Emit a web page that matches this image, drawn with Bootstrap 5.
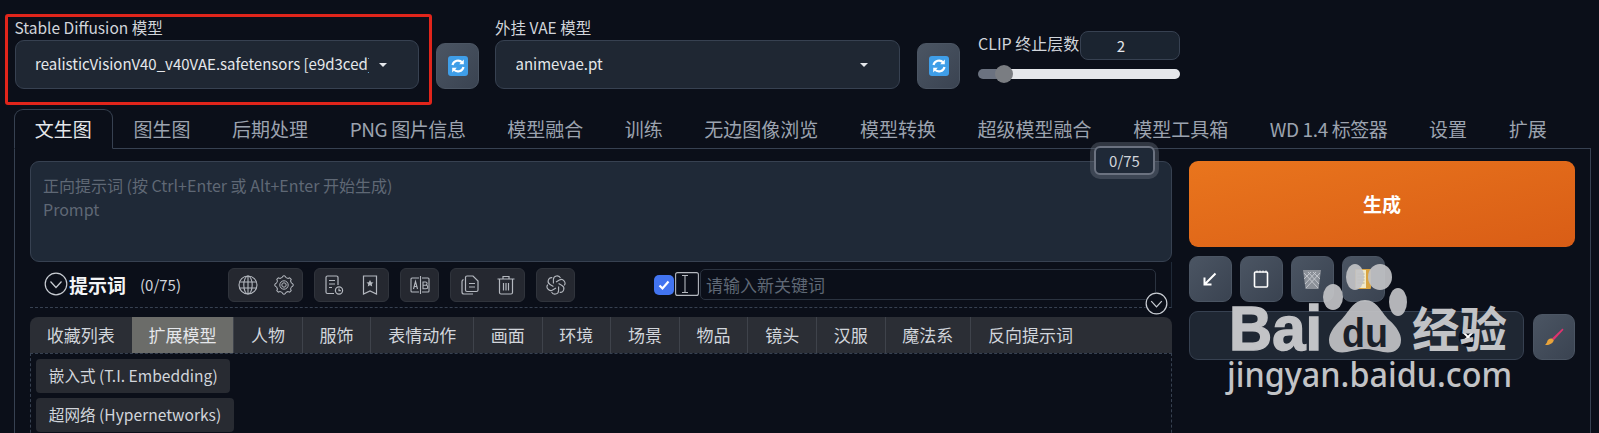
<!DOCTYPE html>
<html lang="zh-CN">
<head>
    <meta charset="UTF-8">
    <meta name="viewport" content="width=device-width, initial-scale=1.0">
    <title>Stable Diffusion WebUI</title>
    <link href="https://cdn.jsdelivr.net/npm/bootstrap@5.3.0/dist/css/bootstrap.min.css" rel="stylesheet">
    <style>
        html, body { height: 433px; overflow: hidden; }
        body {
            background: #0b0f19;
            color: #d1d5db;
            font-family: "Noto Sans CJK SC", "Noto Sans", sans-serif;
            position: relative;
        }
        /* top model bar */
        .topBar { padding: 14px 0 0 5px; height: 109px; }
        .modelBox { width: 427px; height: 91px; border: 3px solid #e1251b; border-radius: 3px; padding: 0 10px 0 6.5px; }
        .vaeBox { width: 405px; margin-left: 16px; padding-top: 3px; }
        .fieldLabel { font-size: 15.5px; line-height: 20px; height: 23px; color: #d1d5db; white-space: nowrap; }
        .fakeSelect {
            height: 49px; width: 100%; padding: 0 31px 0 19.5px;
            background: #1f2733; border: 1px solid #374151; border-radius: 9px;
            color: #e5e7eb; font-size: 15px;
        }
        .fakeSelect:hover, .fakeSelect:active { background: #1f2733 !important; border-color: #374151 !important; color: #e5e7eb !important; }
        .fakeSelect span { flex: 1; overflow: hidden; white-space: nowrap; text-align: left; }
        .fakeSelect::after { margin-left: 10px; }
        .refreshBtn { width: 43px; height: 46px; margin: 29px 0 0 4px; }
        .refreshBtn2 { margin-left: 17px; }
        .grayBtn {
            background: linear-gradient(to bottom right, #4b5563, #3a4351);
            border: 1px solid #4b5563; border-radius: 9px; padding: 0;
        }
        .clipBox { width: 202px; margin: 17px 0 0 18px; }
        .clipLabel { font-size: 16px; white-space: nowrap; line-height: 25px; }
        .clipInput {
            width: 100px; height: 29px; padding: 0 18px 0 0; text-align: center;
            background: #1b2430; border: 1px solid #374151; border-radius: 8px; color: #e5e7eb; font-size: 15px;
        }
        .clipRange {
            -webkit-appearance: none; appearance: none; display: block; width: 202px; height: 10px; margin-top: 9px;
            border-radius: 5px; background: linear-gradient(to right, #6b7280 25px, #e5e7eb 25px);
        }
        .clipRange::-webkit-slider-thumb {
            -webkit-appearance: none; appearance: none; width: 18px; height: 18px; border-radius: 50%;
            background: #7a7d82; border: 0;
        }
        /* main tabs */
        .mainTabs { margin-left: 14px; width: 1577px; height: 40px; --bs-nav-tabs-border-color: #374151; flex-wrap: nowrap; }
        .mainTabs .nav-link {
            height: 40px; padding: 0 19.8px; font-size: 19px; line-height: 38px; color: #9ca3af; white-space: nowrap;
            background: none; border-radius: 9px 9px 0 0; border-color: transparent; margin: 0;
        }
        .mainTabs .nav-link.active { color: #e5e7eb; background: #0b0f19; border-color: #374151 #374151 #0b0f19; }
        .mainTabs .nav-link.tabLatin { letter-spacing: -.4px; }
        .tabPanel { margin-left: 14px; width: 1577px; height: 285px; border: 1px solid #374151; border-top: 0; padding: 12px 15px 0; }
        .leftCol { width: 1142px; position: relative; }
        .rightCol { width: 386px; margin-left: 17px; }
        /* prompt */
        .promptBox {
            display: block; width: 100%; height: 101px; resize: none; padding: 11px 12px;
            background: #1f2937; border: 1px solid #374151; border-radius: 9px;
            color: #e5e7eb; font-size: 16px; line-height: 24px;
        }
        .promptBox::placeholder { color: #5f6875; opacity: 1; }
        .tokenCount {
            position: absolute; top: -15px; right: 17px; width: 61px; height: 29px; line-height: 25px; text-align: center;
            background: #1f2937; border: 2px solid #6b7280; border-radius: 6px; font-size: 15px; color: #d1d5db;
            box-shadow: 0 0 0 4px rgba(107, 114, 128, .4);
        }
        .promptBar { height: 46px; border-bottom: 1px dashed #374151; border-right: 1px solid #1f2937; padding: 6px 0 0 14px; }
        .barTitle { font-size: 19px; font-weight: 700; color: #f3f4f6; margin-left: 1px; width: 57px; line-height: 34px; white-space: nowrap; }
        .barCount { font-size: 15px; margin-left: 14px; width: 88px; color: #d1d5db; line-height: 34px; white-space: nowrap; }
        .toolGroup { height: 34px; background: #252830; border: 1px solid #30343c; border-radius: 6px; margin-right: 11px; padding: 0 8.5px; gap: 16px; }
        .wordCheck { width: 20px; height: 20px; margin: 7px 1px 0 68px; background: #4274f0; border-radius: 5px; }
        .wordInput {
            width: 456px; height: 31px; background: #0b0f19; border: 1px solid #2b3340; border-radius: 5px;
            padding: 0 5px; font-size: 17px; color: #e5e7eb; margin: 1px 0 0 1px;
        }
        .wordInput::placeholder { color: #5f6875; opacity: 1; }
        .chevBtn { position: absolute; top: 131px; right: 4px; background: #0b0f19; border-radius: 50%; line-height: 0; }
        .tagTabs { margin-top: 9px; height: 36px; background: #2b2e35; border-radius: 8px 8px 0 0; overflow: hidden; }
        .tagTab { padding: 0 16.8px; font-size: 17px; line-height: 35px; color: #d1d5db; border-left: 1px solid #3f434b; white-space: nowrap; }
        .tagTab:first-child { border-left: 0; }
        .tagTab.tagOn { background: #6b6c69; color: #e5e7eb; border-left: 0; }
        .tagBody { border: 1px dashed #374151; border-bottom: 0; height: 90px; padding: 5px 5px 0; }
        .subBtn { height: 34px; padding: 0 12.8px; font-size: 15.6px; line-height: 33px; background: #282b32; border-radius: 4px; color: #d1d5db; margin-bottom: 5px; white-space: nowrap; }
        /* generate column */
        .genBtn {
            display: block; width: 100%; height: 86px; border: 0; border-radius: 9px;
            background: linear-gradient(to bottom right, #e9751d, #d95d16);
            color: #fff; font-size: 19px; font-weight: 700;
        }
        .iconRow { margin-top: 9px; gap: 8.5px; }
        .iconBtn { width: 42.5px; height: 46px; }
        .styleRow { margin-top: 9px; }
        .styleSelect { width: 335px; height: 49px; background: #1f2733; border: 1px solid #374151; border-radius: 9px; position: relative; }
        .brushBtn { width: 42px; height: 46px; margin: 3px 0 0 9px; }
        .clearDot { position: absolute; left: 268px; top: 15px; line-height: 0; }
        /* watermark */
        .baiduMark { position: absolute; left: 1220px; top: 250px; width: 300px; height: 175px; pointer-events: none; overflow: visible; }
        .pawShape { fill: #c2c3c6; opacity: .92; }
        .markBig { font-family: "Liberation Sans", sans-serif; font-weight: 700; font-size: 63px; fill: #c2c3c6; stroke: #c2c3c6; stroke-width: 1.5px; }
        .markDu { font-family: "Liberation Sans", sans-serif; font-weight: 700; font-size: 40px; fill: #1b2029; }
        .markCn { font-family: "Noto Sans CJK SC", sans-serif; font-weight: 700; font-size: 48px; fill: #c2c3c6; }
        .markUrl { font-family: "Noto Sans", sans-serif; font-weight: 500; font-size: 35px; fill: #c2c3c6; }
    </style>
</head>
<body>
    <!-- model selectors -->
    <div class="d-flex align-items-start topBar">
        <div class="modelBox">
            <div class="fieldLabel">Stable Diffusion 模型</div>
            <button type="button" class="btn d-flex align-items-center dropdown-toggle fakeSelect"><span>realisticVisionV40_v40VAE.safetensors [e9d3ced]</span></button>
        </div>
        <button type="button" class="btn grayBtn refreshBtn d-flex align-items-center justify-content-center">
            <svg width="20" height="20" viewBox="0 0 20 20"><rect width="20" height="20" rx="3" fill="#3f9ee8"/><path d="M4.5 9a5.6 5.6 0 0 1 9.8-2.4M15.5 11a5.6 5.6 0 0 1-9.8 2.4" fill="none" stroke="#fff" stroke-width="2.2"/><path d="M15.8 3.6v4.6h-4.6zM4.2 16.4v-4.6h4.6z" fill="#fff"/></svg>
        </button>
        <div class="vaeBox">
            <div class="fieldLabel">外挂 VAE 模型</div>
            <button type="button" class="btn d-flex align-items-center dropdown-toggle fakeSelect"><span>animevae.pt</span></button>
        </div>
        <button type="button" class="btn grayBtn refreshBtn refreshBtn2 d-flex align-items-center justify-content-center">
            <svg width="20" height="20" viewBox="0 0 20 20"><rect width="20" height="20" rx="3" fill="#3f9ee8"/><path d="M4.5 9a5.6 5.6 0 0 1 9.8-2.4M15.5 11a5.6 5.6 0 0 1-9.8 2.4" fill="none" stroke="#fff" stroke-width="2.2"/><path d="M15.8 3.6v4.6h-4.6zM4.2 16.4v-4.6h4.6z" fill="#fff"/></svg>
        </button>
        <div class="clipBox">
            <div class="d-flex justify-content-between">
                <span class="clipLabel">CLIP 终止层数</span>
                <input class="clipInput" type="text" value="2">
            </div>
            <input class="clipRange" type="range" min="1" max="12" value="2">
        </div>
    </div>

    <!-- main tabs -->
    <ul class="nav nav-tabs mainTabs">
        <li class="nav-item"><a class="nav-link active" href="#">文生图</a></li>
        <li class="nav-item"><a class="nav-link" href="#">图生图</a></li>
        <li class="nav-item"><a class="nav-link" href="#">后期处理</a></li>
        <li class="nav-item"><a class="nav-link tabLatin" href="#">PNG 图片信息</a></li>
        <li class="nav-item"><a class="nav-link" href="#">模型融合</a></li>
        <li class="nav-item"><a class="nav-link" href="#">训练</a></li>
        <li class="nav-item"><a class="nav-link" href="#">无边图像浏览</a></li>
        <li class="nav-item"><a class="nav-link" href="#">模型转换</a></li>
        <li class="nav-item"><a class="nav-link" href="#">超级模型融合</a></li>
        <li class="nav-item"><a class="nav-link" href="#">模型工具箱</a></li>
        <li class="nav-item"><a class="nav-link tabLatin" href="#">WD 1.4 标签器</a></li>
        <li class="nav-item"><a class="nav-link" href="#">设置</a></li>
        <li class="nav-item"><a class="nav-link" href="#">扩展</a></li>
    </ul>

    <div class="d-flex tabPanel">
        <div class="leftCol">
            <textarea class="promptBox" placeholder="正向提示词 (按 Ctrl+Enter 或 Alt+Enter 开始生成)&#10;Prompt"></textarea>
            <div class="tokenCount">0/75</div>

            <!-- prompt toolbar -->
            <div class="d-flex align-items-start promptBar">
                <svg class="mt-1 flex-shrink-0" width="24" height="24" viewBox="0 0 24 24" fill="none" stroke="#c9cdd3" stroke-width="1.2"><circle cx="12" cy="12" r="10.8"/><path d="M6.5 9.5 12 15.5l5.5-6"/></svg>
                <span class="barTitle">提示词</span>
                <span class="barCount">(0/75)</span>

                <div class="d-flex align-items-center toolGroup">
                    <svg width="20" height="20" viewBox="0 0 20 20" fill="none" stroke="#b4b8bf" stroke-width="1.1"><circle cx="10" cy="10" r="9"/><ellipse cx="10" cy="10" rx="4.2" ry="9"/><path d="M10 1v18M1.6 7h16.800M1.600 13h16.800"/></svg>
                    <svg width="20" height="20" viewBox="0 0 20 20" fill="none" stroke="#b4b8bf" stroke-width="1"><defs><path id="gearTooth" d="M8.200 2.600 8.900.9h2.200l.7 1.700A7.600 7.600 0 0 1 13.960 3.500"/></defs><use href="#gearTooth"/><use href="#gearTooth" transform="rotate(45 10 10)"/><use href="#gearTooth" transform="rotate(90 10 10)"/><use href="#gearTooth" transform="rotate(135 10 10)"/><use href="#gearTooth" transform="rotate(180 10 10)"/><use href="#gearTooth" transform="rotate(225 10 10)"/><use href="#gearTooth" transform="rotate(270 10 10)"/><use href="#gearTooth" transform="rotate(315 10 10)"/><circle cx="10" cy="10" r="4.200"/><circle cx="10" cy="10" r="2.200"/></svg>
                </div>
                <div class="d-flex align-items-center toolGroup">
                    <svg width="20" height="20" viewBox="0 0 20 20" fill="none" stroke="#b4b8bf" stroke-width="1.2"><path d="M10 18.500H3.500a1.500 1.500 0 0 1-1.500-1.500V2.500A1.500 1.500 0 0 1 3.500 1h9a1.500 1.500 0 0 1 1.500 1.500V10M5 5.500h6M5 9h6M5 12.500h3"/><circle cx="15" cy="15.500" r="3.600"/><path d="M15 13.500v2.200h1.800"/></svg>
                    <svg width="20" height="20" viewBox="0 0 20 20" fill="none" stroke="#b4b8bf" stroke-width="1.200"><path d="M3.500 1h13v18l-6.500-3-6.500 3z"/><path d="m10 5 1.200 2.200 2.300.3-1.700 1.600.4 2.300-2.200-1.100-2.200 1.100.4-2.300-1.700-1.600 2.300-.3z" fill="#b4b8bf" stroke="none"/></svg>
                </div>
                <div class="d-flex align-items-center toolGroup">
                    <svg width="20" height="20" viewBox="0 0 20 20" fill="none" stroke="#b4b8bf" stroke-width="1.100"><path d="M9 3H2a1 1 0 0 0-1 1v12a1 1 0 0 0 1 1h7M12 3h6a1 1 0 0 1 1 1v12a1 1 0 0 1-1 1h-6" /><path d="M10.500 1v18M3.500 14l2-7.500 2 7.500M4.200 11.500h2.600M13 7h2.500a1.500 1.500 0 0 1 0 3.200H13zM13 10.200h3a1.700 1.700 0 0 1 0 3.600h-3z"/></svg>
                </div>
                <div class="d-flex align-items-center toolGroup">
                    <svg width="20" height="20" viewBox="0 0 20 20" fill="none" stroke="#b4b8bf" stroke-width="1.200"><path d="M7 1h6l5 5v9a1.500 1.500 0 0 1-1.500 1.500H7A1.500 1.500 0 0 1 5.500 15V2.500A1.500 1.500 0 0 1 7 1zM9 8.500h6M9 12h6M3.500 4.500C2.500 5 2 5.600 2 6.500V17a2 2 0 0 0 2 2h9"/></svg>
                    <svg width="20" height="20" viewBox="0 0 20 20" fill="none" stroke="#b4b8bf" stroke-width="1.200"><path d="M1.500 4h17M7 4V1.500h6V4M3.500 4v13.500A1.500 1.500 0 0 0 5 19h10a1.500 1.500 0 0 0 1.500-1.500V4M7.500 8v7.500M10 8v7.500M12.500 8v7.500"/></svg>
                </div>
                <div class="d-flex align-items-center toolGroup">
                    <svg width="20" height="20" viewBox="0 0 20 20" fill="none" stroke="#b4b8bf" stroke-width="1.100"><defs><path id="knotLobe" d="M7.400 8.500V4.600a3.700 3.700 0 0 1 7.100-1.500"/></defs><use href="#knotLobe"/><use href="#knotLobe" transform="rotate(60 10 10)"/><use href="#knotLobe" transform="rotate(120 10 10)"/><use href="#knotLobe" transform="rotate(180 10 10)"/><use href="#knotLobe" transform="rotate(240 10 10)"/><use href="#knotLobe" transform="rotate(300 10 10)"/></svg>
                </div>

                <span class="wordCheck d-flex align-items-center justify-content-center">
                    <svg width="14" height="14" viewBox="0 0 14 14" fill="none" stroke="#fff" stroke-width="2.200"><path d="m2.500 7.500 3 3 6-7"/></svg>
                </span>
                <svg class="mt-1 flex-shrink-0" width="24" height="24" viewBox="0 0 24 24" fill="none" stroke="#b4b8bf" stroke-width="1.100"><rect x=".6" y=".6" width="22.800" height="22.800" rx="2"/><path d="M7 3.500h6M7 20.500h6M10 3.500v17"/></svg>
                <input class="wordInput" type="text" placeholder="请输入新关键词">
            </div>
            <div class="chevBtn">
                <svg width="23" height="23" viewBox="0 0 24 24" fill="none" stroke="#c9cdd3" stroke-width="1.300"><circle cx="12" cy="12" r="10.800"/><path d="M6.500 9.500 12 15.500l5.500-6"/></svg>
            </div>

            <!-- tag category tabs -->
            <div class="d-flex tagTabs">
                <div class="tagTab">收藏列表</div>
                <div class="tagTab tagOn">扩展模型</div>
                <div class="tagTab">人物</div>
                <div class="tagTab">服饰</div>
                <div class="tagTab">表情动作</div>
                <div class="tagTab">画面</div>
                <div class="tagTab">环境</div>
                <div class="tagTab">场景</div>
                <div class="tagTab">物品</div>
                <div class="tagTab">镜头</div>
                <div class="tagTab">汉服</div>
                <div class="tagTab">魔法系</div>
                <div class="tagTab">反向提示词</div>
            </div>
            <div class="tagBody d-flex flex-column align-items-start">
                <div class="subBtn">嵌入式 (T.I. Embedding)</div>
                <div class="subBtn">超网络 (Hypernetworks)</div>
            </div>
        </div>

        <div class="rightCol">
            <button type="button" class="genBtn">生成</button>
            <div class="d-flex iconRow">
                <button type="button" class="btn grayBtn iconBtn d-flex align-items-center justify-content-center">
                    <svg width="16" height="16" viewBox="0 0 16 16" fill="none" stroke="#fff" stroke-width="2"><path d="M13.500 2.500 3 13M2.500 6.500v7h7"/></svg>
                </button>
                <button type="button" class="btn grayBtn iconBtn d-flex align-items-center justify-content-center">
                    <svg width="16" height="18" viewBox="0 0 16 18" fill="none" stroke="#fff" stroke-width="1.600"><rect x="1.500" y="2" width="13" height="15" rx="1"/><path d="M4 .5v2M7 .5v2M10 .5v2M13 .5v2" stroke-width="1"/></svg>
                </button>
                <button type="button" class="btn grayBtn iconBtn d-flex align-items-center justify-content-center">
                    <svg width="20" height="21" viewBox="0 0 20 21"><path d="M1 1h18l-2.500 19h-13z" fill="#8b9098"/><path d="M2 4l14 15M6 3l11 12M11 3l7 7M18 4 4 19M14 3 3 15M9 3 2 10" stroke="#c8ccd1" stroke-width=".9" fill="none"/></svg>
                </button>
                <button type="button" class="btn grayBtn iconBtn d-flex align-items-center justify-content-center">
                    <svg width="16" height="20" viewBox="0 0 16 20"><rect width="16" height="20" rx="1" fill="#d9a441"/><rect x="1" y="1" width="10" height="18" fill="#f1e9c9"/><path d="M2.500 5h7M2.500 8h7M2.500 11h7M2.500 14h7" stroke="#b5ab8a"/></svg>
                </button>
            </div>
            <div class="d-flex align-items-start styleRow">
                <div class="styleSelect">
                    <span class="clearDot">
                        <svg width="20" height="20" viewBox="0 0 20 20"><circle cx="10" cy="10" r="9.500" fill="#0b0f19"/><path d="m5.500 5.500 9 9m0-9-9 9" stroke="#fff" stroke-width="1.800"/></svg>
                    </span>
                </div>
                <button type="button" class="btn grayBtn brushBtn d-flex align-items-center justify-content-center">
                    <svg width="20" height="20" viewBox="0 0 20 20"><path d="M18.500 1.500 8 11.500l1.800 1.800L19.500 2.800z" fill="#e0336f"/><path d="M8 11.500c-2.500-.5-4.500 1-4.800 3-.2 1.400-1.200 2.500-2.200 3.300 3 .7 7.500-.4 8.800-4.500z" fill="#e8a33a"/></svg>
                </button>
            </div>
        </div>
    </div>

    <!-- watermark over the right column -->
    <svg class="baiduMark" viewBox="0 0 300 175">
        <text class="markBig" x="9" y="100" textLength="93" lengthAdjust="spacingAndGlyphs">Bai</text>
        <g class="pawShape">
            <ellipse cx="113" cy="47" rx="10" ry="13"/>
            <ellipse cx="135" cy="27" rx="9" ry="13"/>
            <ellipse cx="160" cy="27" rx="12" ry="13"/>
            <ellipse cx="178" cy="52" rx="9" ry="14"/>
            <path d="M145 50c12 0 16 12 24 20 8 7 12 14 12 20 0 10-8 14-18 12-6-1-12-3-18-3s-12 2-18 3c-10 2-18-2-18-12 0-6 4-13 12-20 8-8 12-20 24-20z"/>
        </g>
        <text class="markDu" x="122" y="97" textLength="46" lengthAdjust="spacingAndGlyphs">du</text>
        <text class="markCn" x="192" y="97" textLength="95" lengthAdjust="spacingAndGlyphs">经验</text>
        <text class="markUrl" x="7" y="137" textLength="285" lengthAdjust="spacingAndGlyphs">jingyan.baidu.com</text>
    </svg>

    <script src="https://cdn.jsdelivr.net/npm/bootstrap@5.3.0/dist/js/bootstrap.bundle.min.js"></script>
</body>
</html>
